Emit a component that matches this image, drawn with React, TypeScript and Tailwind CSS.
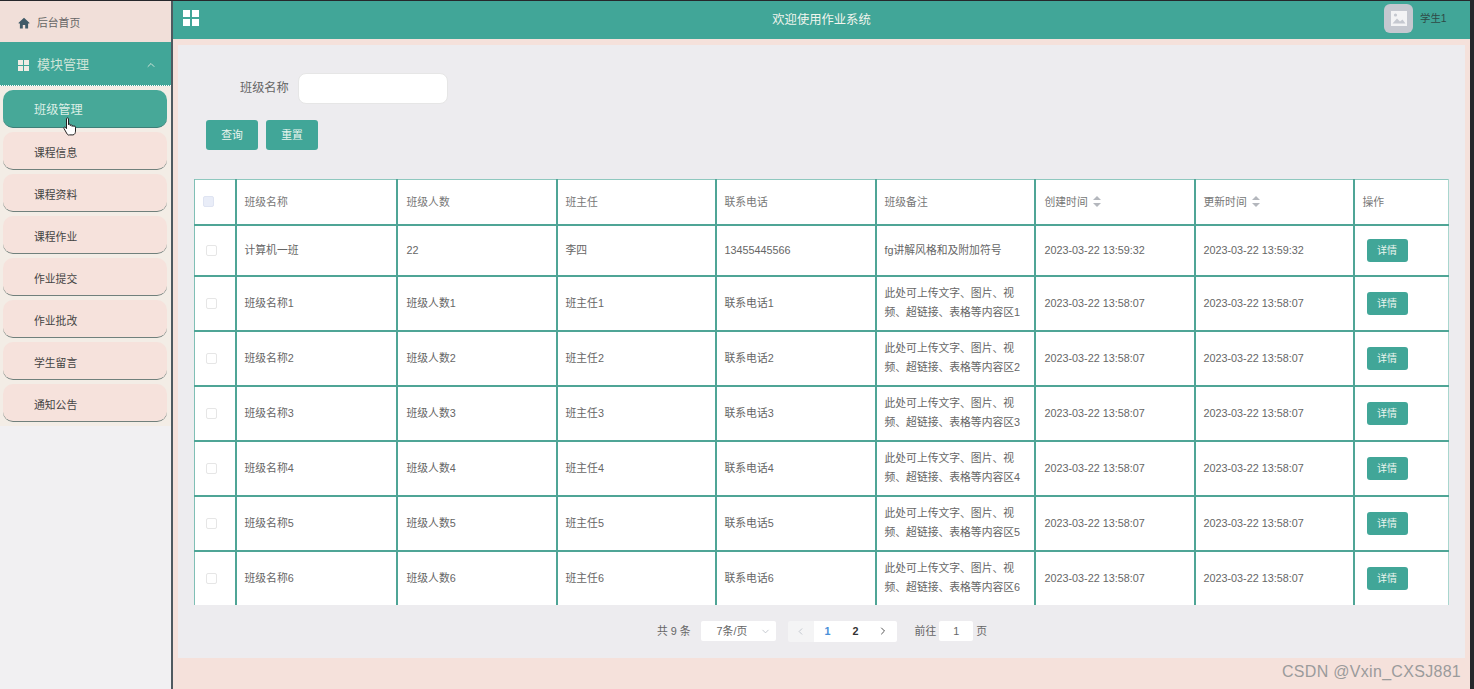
import React from 'react';
import { ChevronUp, ChevronDown, ChevronLeft, ChevronRight } from 'lucide-react';

const menuItems = ['班级管理', '课程信息', '课程资料', '课程作业', '作业提交', '作业批改', '学生留言', '通知公告'];

const columns = [
  { label: '班级名称', width: 161 },
  { label: '班级人数', width: 160 },
  { label: '班主任', width: 159 },
  { label: '联系电话', width: 160 },
  { label: '班级备注', width: 159 },
  { label: '创建时间', width: 160, sort: true },
  { label: '更新时间', width: 159, sort: true },
  { label: '操作', width: 95 },
];

const rows = [
  { name: '计算机一班', count: '22', teacher: '李四', phone: '13455445566', note: 'fg讲解风格和及附加符号', created: '2023-03-22 13:59:32', updated: '2023-03-22 13:59:32' },
  ...[1, 2, 3, 4, 5, 6].map((n) => ({
    name: `班级名称${n}`,
    count: `班级人数${n}`,
    teacher: `班主任${n}`,
    phone: `联系电话${n}`,
    note: `此处可上传文字、图片、视频、超链接、表格等内容区${n}`,
    created: '2023-03-22 13:58:07',
    updated: '2023-03-22 13:58:07',
  })),
];

const GridIcon = ({ size, gap, color }: { size: number; gap: number; color: string }) => (
  <svg width={size * 2 + gap} height={size * 2 + gap} fill={color}>
    <rect width={size} height={size} />
    <rect x={size + gap} width={size} height={size} />
    <rect y={size + gap} width={size} height={size} />
    <rect x={size + gap} y={size + gap} width={size} height={size} />
  </svg>
);

const HomeIcon = () => (
  <svg width="12" height="12" viewBox="0 0 12 12" fill="#3f5a68">
    <path d="M6 .8.6 5.8v.8h1.3V11.5h2.9V8h2.4v3.5h2.9V6.6h1.3v-.8z" />
  </svg>
);

const HandCursor = () => (
  <svg width="15" height="20" viewBox="0 0 15 20" className="absolute left-[63px] top-[117px]">
    <path
      d="M3.5 1.8c0-1.2 2-1.2 2 0v6c0-1 1.8-1 1.8 0v.8c0-1 1.8-1 1.8 0v.8c0-1 1.8-.9 1.8.1 0-.6 1.6-.5 1.6.6v4c0 2-1 3.8-2.6 3.8H6.5C5 18.500 4.500 17.500 3.500 16L1 11.500c-.6-1.200.8-2 1.600-1L3.500 11.700z"
      fill="#fff"
      stroke="#222"
      strokeWidth="1"
    />
  </svg>
);

const SortIcon = () => (
  <svg width="8" height="11" viewBox="0 0 8 11" fill="#b4b7bd" className="ml-[5px]">
    <path d="M4 0 8 4H0zM4 11 0 7h8z" />
  </svg>
);

const Checkbox = ({ head }: { head?: boolean }) => (
  <div className={`size-[11px] rounded-[2px] border ${head ? 'border-[#dfe4f2] bg-[#e9edf8]' : 'border-[#e6e6e6] bg-white'}`} />
);

export default function App() {
  return (
    <div
      className="relative flex h-[689px] w-[1474px] overflow-hidden bg-[#26272b] pt-px pr-1 text-[10.8px] text-[#666]"
      style={{ fontFamily: '"Liberation Sans", "Noto Sans CJK SC", sans-serif' }}
    >
      <aside className="flex w-[173px] shrink-0 flex-col border-r-2 border-[#4f5a60] bg-[#f1f0f2]">
        <div className="flex h-[41px] items-center gap-[7px] bg-[#f1dfd9] pt-[3px] pl-[18px] text-[#666]">
          <HomeIcon />
          <span>后台首页</span>
        </div>
        <div className="flex h-[44px] items-center border-b border-dotted border-white bg-[#41a698] pt-[3px] pr-[14px] pl-[18px] text-[13px] text-[#cfe5d8]">
          <GridIcon size={5} gap={1} color="#f1ece4" />
          <span className="ml-[8px]">模块管理</span>
          <ChevronUp size={12} className="ml-auto text-[#cfe5d8]" />
        </div>
        <nav className="flex flex-col gap-1 bg-[#f3ede6] pt-[4px] pr-[4px] pb-1 pl-[3px]">
          {menuItems.map((item, i) => (
            <div
              key={item}
              className={`flex h-[38px] items-center rounded-[10px] border-b pl-[31px] ${
                i === 0
                  ? 'border-[#3f7f78] bg-[#47a898] pt-[4px] text-[12.2px] text-[#dcefe6]'
                  : 'border-[#70807c] bg-[#f6e2dc] pt-[6px] text-[#444]'
              }`}
            >
              {item}
            </div>
          ))}
        </nav>
      </aside>

      <main className="flex min-w-0 flex-1 flex-col bg-[#f5e1db]">
        <header className="relative flex h-[38px] shrink-0 items-center justify-center bg-[#41a698] text-[12.3px] text-[#f1f5ee]">
          <div className="absolute top-[9px] left-[10px]">
            <GridIcon size={7} gap={2} color="#ffffff" />
          </div>
          <span>欢迎使用作业系统</span>
          <div className="absolute top-[3px] left-[1211px] flex items-center gap-[7px] text-[10.4px] text-[#2f4a46]">
            <div className="flex size-[29px] items-center justify-center rounded-[6px] bg-[#c5c8d0]">
              <svg width="16" height="15" viewBox="0 0 16 15">
                <rect width="16" height="15" fill="#f3f3f5" />
                <circle cx="4.500" cy="4" r="1.600" fill="#c5c8d0" />
                <path d="M1.500 12.500 6 7.500l3 3 2.500-2 3 4z" fill="#c5c8d0" />
              </svg>
            </div>
            <span>学生1</span>
          </div>
        </header>

        <section className="mx-[5px] mt-[6px] flex h-[613px] flex-col bg-[#edecef] px-[16px]">
          <div className="flex items-center pt-[28px] pl-[46px]">
            <label className="text-[12.2px] text-[#666]">班级名称</label>
            <div className="ml-[9px] h-[31px] w-[150px] rounded-[8px] border border-[#e6e6e6] bg-white" />
          </div>
          <div className="mt-[16px] flex gap-[8px] pl-[12px]">
            <button className="h-[30px] w-[52px] rounded-[3px] bg-[#41a698] text-[10.8px] text-[#eaf5ee]">查询</button>
            <button className="h-[30px] w-[52px] rounded-[3px] bg-[#41a698] text-[10.8px] text-[#eaf5ee]">重置</button>
          </div>

          <div className="mt-[29px] h-[426px] w-[1256px] overflow-hidden">
            <table className="w-[1254px] table-fixed border-collapse bg-white">
              <colgroup>
                <col className="w-[41px]" />
                {columns.map((c) => (
                  <col key={c.label} style={{ width: c.width }} />
                ))}
              </colgroup>
              <thead>
                <tr className="h-[45px] border-t border-[#8fc8bf] text-[#777]">
                  <th className="border-r-2 border-b-2 border-l border-[#4fa596] border-l-[#7fbfb5] pl-[8px]">
                    <Checkbox head />
                  </th>
                  {columns.map((c, i) => (
                    <th
                      key={c.label}
                      className={`border-b-2 border-[#4fa596] text-left font-normal ${i === 1 || i === 5 ? 'pl-[9px]' : 'pl-[8px]'} ${i < 7 ? 'border-r-2' : 'border-r border-r-[#a9d6ce]'}`}
                    >
                      <span className="flex items-center">
                        {c.label}
                        {c.sort && <SortIcon />}
                      </span>
                    </th>
                  ))}
                </tr>
              </thead>
              <tbody>
                {rows.map((r, i) => (
                  <tr key={r.name} className={i === 0 ? 'h-[51px]' : 'h-[55px]'}>
                    <td className="border-r-2 border-b-2 border-l border-[#4fa596] border-l-[#7fbfb5] pl-[11px]">
                      <Checkbox />
                    </td>
                    <td className="border-r-2 border-b-2 border-[#4fa596] pl-[8px]">{r.name}</td>
                    <td className="border-r-2 border-b-2 border-[#4fa596] pl-[9px]">{r.count}</td>
                    <td className="border-r-2 border-b-2 border-[#4fa596] pl-[8px]">{r.teacher}</td>
                    <td className="border-r-2 border-b-2 border-[#4fa596] pl-[8px]">{r.phone}</td>
                    <td className="border-r-2 border-b-2 border-[#4fa596] px-[8px] leading-[19px]">{r.note}</td>
                    <td className="border-r-2 border-b-2 border-[#4fa596] pl-[9px]">{r.created}</td>
                    <td className="border-r-2 border-b-2 border-[#4fa596] pl-[8px]">{r.updated}</td>
                    <td className="border-r border-b-2 border-[#4fa596] border-r-[#a9d6ce] pl-[12px]">
                      <button className="h-[23px] w-[41px] rounded-[3px] bg-[#41a698] text-[10px] text-[#eaf5ee]">详情</button>
                    </td>
                  </tr>
                ))}
              </tbody>
            </table>
          </div>

          <div className="mt-[15px] flex h-[22px] items-center pl-[463px] text-[#666]">
            <span>共 9 条</span>
            <div className="ml-[10px] flex h-[20px] w-[75px] items-center rounded-[2px] bg-white pr-[5px] pl-[16px]">
              <span>7条/页</span>
              <ChevronDown size={11} className="ml-auto text-[#c0c4cc]" />
            </div>
            <div className="ml-[12px] flex h-[21px] items-center">
              <div className="flex h-full w-[26px] items-center justify-center rounded-l-[2px] bg-[#f4f4f5] text-[#c0c4cc]">
                <ChevronLeft size={11} />
              </div>
              <div className="flex h-full w-[28px] items-center justify-center bg-white font-bold text-[#4a90d9]">1</div>
              <div className="flex h-full w-[28px] items-center justify-center bg-white font-bold text-[#333]">2</div>
              <div className="flex h-full w-[27px] items-center justify-center rounded-r-[2px] bg-white text-[#555]">
                <ChevronRight size={12} />
              </div>
            </div>
            <span className="ml-[18px]">前往</span>
            <div className="ml-[3px] flex h-[20px] w-[34px] items-center justify-center rounded-[2px] bg-white">1</div>
            <span className="ml-[3px]">页</span>
          </div>
        </section>
      </main>

      <HandCursor />
      <div className="absolute top-[660px] left-[1282px] text-[16px] tracking-[0.3px] text-[#9b9b9b]">CSDN @Vxin_CXSJ881</div>
    </div>
  );
}
